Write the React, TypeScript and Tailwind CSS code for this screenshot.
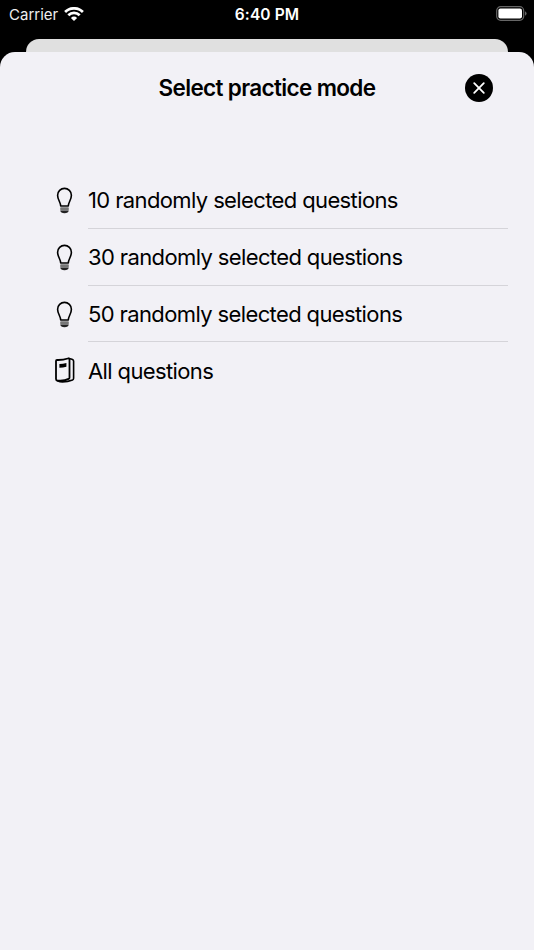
const font = "font-['Inter','Liberation_Sans',sans-serif]";

function WifiIcon() {
  return (
    <svg width="20" height="14" viewBox="0 0 20 14" fill="none" stroke="white" strokeWidth="2.7">
      <path d="M1.1 5A12.6 12.6 0 0 1 18.9 5" />
      <path d="M4.3 8.3A8.1 8.1 0 0 1 15.7 8.3" />
      <path d="M10 14L6.9 10.9A4.4 4.4 0 0 1 13.1 10.9Z" fill="white" stroke="none" />
    </svg>
  );
}

function BatteryIcon() {
  return (
    <svg width="31" height="15" viewBox="0 0 31 15">
      <rect x="0.7" y="0.7" width="27" height="13.6" rx="4" fill="none" stroke="#666" strokeWidth="1.2" />
      <rect x="2.4" y="2.4" width="23.6" height="10.2" rx="2" fill="white" />
      <path d="M29 5.2Q30.6 6 30.6 7.5T29 9.8Z" fill="#666" />
    </svg>
  );
}

function BulbIcon() {
  return (
    <svg width="20" height="28" viewBox="0 0 20 28" fill="none" stroke="black" strokeWidth="1.6">
      <path d="M5.7 19C5.5 14.8 2.6 12.8 2.6 8.2a6.9 6.8 0 0 1 13.8 0C16.4 12.8 13.5 14.8 13.3 19Z" strokeLinejoin="round" />
      <rect x="5.2" y="20.2" width="8.6" height="3" rx="0.8" fill="#777" stroke="none" />
      <path d="M5.2 23.4H13.8C13.8 25 11.9 26.2 9.5 26.2S5.2 25 5.2 23.4Z" fill="#222" stroke="none" />
    </svg>
  );
}

function BookIcon() {
  return (
    <svg width="20" height="28" viewBox="0 0 20 28" fill="none" stroke="black" strokeWidth="1.8" strokeLinejoin="round" strokeLinecap="round">
      <path d="M1 5Q1 4 2 4Q8 4.2 12.8 2.5Q14.5 2 14.5 3.5V21.4Q14.5 22.5 13.6 22.9Q9 25.2 2.3 24.5Q1 24.3 1 23Z" />
      <path d="M14 2.4L17 3.2Q18.6 3.7 18.6 5V22.2Q18.6 23.5 17.5 24Q12 26.3 5 25.8L2.4 24.8" strokeWidth="1.6" />
      <path d="M4.4 8Q8 7.8 11.4 7V10.7Q8 11.6 4.4 11.7Z" fill="black" stroke="none" />
    </svg>
  );
}

const modes = [
  "10 randomly selected questions",
  "30 randomly selected questions",
  "50 randomly selected questions",
  "All questions",
];

export default function App() {
  return (
    <div className={`flex h-[950px] w-[534px] flex-col overflow-hidden bg-black text-black ${font}`}>
      <header className="grid h-[39px] grid-cols-3 items-start px-[9px] pt-[4px] text-white">
        <div className="flex h-5 items-center gap-[6px]">
          <span className="pt-px text-[15px] leading-5 text-[#eee]">Carrier</span>
          <WifiIcon />
        </div>
        <div className="pt-px text-center text-[15.5px] leading-5 font-semibold tracking-[0.1px]">6:40 PM</div>
        <div className="-mr-[2px] flex h-[18px] items-center justify-end">
          <BatteryIcon />
        </div>
      </header>
      <div className="mx-[26px] h-[13px] shrink-0 rounded-t-[13px] bg-[#e0e0e0]" />
      <main className="grow rounded-t-[15px] bg-[#f2f1f6]">
        <div className="grid h-[72px] grid-cols-[1fr_auto_1fr] items-center">
          <span />
          <h1 className="text-[22.5px] leading-8 font-semibold tracking-[-0.65px]">Select practice mode</h1>
          <button aria-label="Close" className="mr-[41px] flex size-7 items-center justify-center justify-self-end rounded-full bg-black">
            <svg width="14" height="14" viewBox="0 0 14 14" stroke="white" strokeWidth="1.8" strokeLinecap="round">
              <path d="M2.2 2.2L11.8 11.8M11.8 2.2L2.2 11.8" />
            </svg>
          </button>
        </div>
        <ul className="mt-12 mr-[26px] ml-[55px]">
          {modes.map((mode, i) => (
            <li key={mode} className={`flex ${i < 3 ? "h-[56.8px]" : "h-[56px]"}`}>
              <div className={`flex w-[33px] items-center ${i < 3 ? "pt-[2px]" : ""}`}>{i < 3 ? <BulbIcon /> : <BookIcon />}</div>
              <div className={`flex grow items-center pt-[1.2px] text-[22px] leading-7 tracking-[-0.62px] ${i < 3 ? "border-b border-[#d5d4d9]" : ""}`}>
                {mode}
              </div>
            </li>
          ))}
        </ul>
      </main>
    </div>
  );
}
